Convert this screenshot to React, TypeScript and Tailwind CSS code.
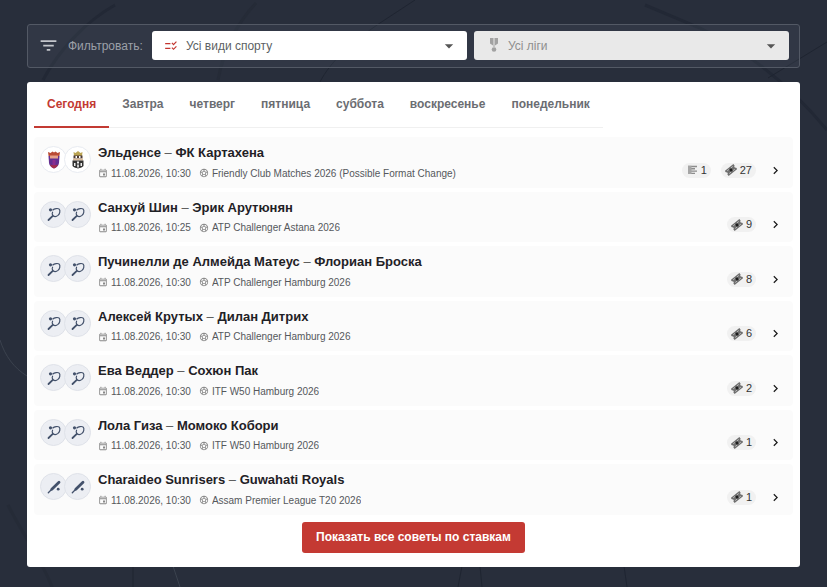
import React, { useState } from "react";
import {
  MdArrowDropDown,
  MdChecklistRtl,
  MdChevronRight,
  MdFilterList,
  MdOutlineEvent,
  MdSportsSoccer,
} from "react-icons/md";

type Match = {
  home: string;
  away: string;
  date: string;
  league: string;
  sport: "soccer" | "tennis" | "cricket";
  previews?: number;
  tips: number;
};

const days = ["Сегодня", "Завтра", "четверг", "пятница", "суббота", "воскресенье", "понедельник"];

const matches: Match[] = [
  { home: "Эльденсе", away: "ФК Картахена", date: "11.08.2026, 10:30", league: "Friendly Club Matches 2026 (Possible Format Change)", sport: "soccer", previews: 1, tips: 27 },
  { home: "Санхуй Шин", away: "Эрик Арутюнян", date: "11.08.2026, 10:25", league: "ATP Challenger Astana 2026", sport: "tennis", tips: 9 },
  { home: "Пучинелли де Алмейда Матеус", away: "Флориан Броска", date: "11.08.2026, 10:30", league: "ATP Challenger Hamburg 2026", sport: "tennis", tips: 8 },
  { home: "Алексей Крутых", away: "Дилан Дитрих", date: "11.08.2026, 10:30", league: "ATP Challenger Hamburg 2026", sport: "tennis", tips: 6 },
  { home: "Ева Веддер", away: "Сохюн Пак", date: "11.08.2026, 10:30", league: "ITF W50 Hamburg 2026", sport: "tennis", tips: 2 },
  { home: "Лола Гиза", away: "Момоко Кобори", date: "11.08.2026, 10:30", league: "ITF W50 Hamburg 2026", sport: "tennis", tips: 1 },
  { home: "Charaideo Sunrisers", away: "Guwahati Royals", date: "11.08.2026, 10:30", league: "Assam Premier League T20 2026", sport: "cricket", tips: 1 },
];

function Backdrop() {
  return (
    <svg
      className="absolute inset-0 h-full w-full"
      viewBox="0 0 827 587"
      preserveAspectRatio="none"
      fill="none"
      aria-hidden="true"
    >
      <g stroke="#222835" strokeWidth="3">
        <path d="M115 5C88 20 60 48 43 80" />
        <path d="M256 3C238 22 224 48 218 80" stroke="#252b37" />
        <path d="M645 5L700 28C745 50 790 85 827 130" />
        <path d="M8 505C20 530 42 560 52 587" stroke="#252b37" />
      </g>
      <g stroke="#1f2531">
        <path d="M415 0L380 23C352 42 330 62 320 82" />
        <path d="M827 42L768 78" />
        <path d="M458 587L462 566M480 566L482 587M624 566L627 587M133 566L133 587" />
      </g>
      <path d="M0 340C5 356 14 368 27 376M173 566L180 587" stroke="#3b424e" />
    </svg>
  );
}

function MedalIcon() {
  return (
    <svg className="h-4 w-4" viewBox="0 0 16 16" fill="#a2a2a2" aria-hidden="true">
      <path d="M4 1h3v7.500L4 6.500zM9 1h3v5.500L9 8.500z" />
      <path d="M7 1h2v9H7z" fill="#c6c6c6" />
      <circle cx="8" cy="12.500" r="2.300" />
    </svg>
  );
}

function TicketIcon() {
  return (
    <svg className="h-3 w-3" viewBox="0 0 12 12" fill="none" aria-hidden="true">
      <g transform="rotate(-38 6 6)">
        <path d="M.5 2.800h11v2.200a1 1 0 0 0 0 2v2.200H.5V7a1 1 0 0 0 0-2z" fill="#6e6e6e" />
        <path d="M2.500 4.300h2.200M7.300 4.300h2.200M2.500 7.700h2.200M7.300 7.700h2.200" stroke="#d5d5d5" strokeWidth=".7" />
        <path d="M4.800 4.800h2.400v2.400H4.800z" fill="#1c1c1c" />
      </g>
    </svg>
  );
}

function PreviewIcon() {
  return (
    <svg className="h-3 w-3" viewBox="0 0 12 12" fill="none" aria-hidden="true">
      <path d="M2 2.500h9M2 4.800h7M2 7.100h9M2 9.400h7" stroke="#8c8c8c" strokeWidth="1.400" />
      <path d="M2 1.800h3.500v8.200H2z" fill="#a5a5a5" />
    </svg>
  );
}

function TennisIcon() {
  return (
    <svg className="h-4 w-4" viewBox="0 0 16 16" fill="none" aria-hidden="true">
      <path
        d="M6.500 4.200C8.500 2.300 12 2 13.200 3.200c1.300 1.500.6 4.600-1.200 6.200-1.500 1.200-3.800 1.200-5 .3-.9-1-1-2.700-.3-4"
        stroke="#43516b"
        strokeWidth="1.200"
      />
      <path d="M6.800 9.800L2.500 14" stroke="#43516b" strokeWidth="1.800" strokeLinecap="round" />
      <circle cx="4.500" cy="3.800" r="1.600" fill="#43516b" />
    </svg>
  );
}

function CricketIcon() {
  return (
    <svg className="h-4 w-4" viewBox="0 0 16 16" fill="none" aria-hidden="true">
      <path d="M13 3.200L5.800 10.300" stroke="#43516b" strokeWidth="2.800" strokeLinecap="round" />
      <path d="M6 10L2.300 13.800" stroke="#43516b" strokeWidth="1.300" strokeLinecap="round" />
      <circle cx="12.200" cy="10.200" r="1.400" fill="#43516b" />
    </svg>
  );
}

function PurpleCrest() {
  return (
    <svg className="h-[18px] w-[18px]" viewBox="0 0 18 18" aria-hidden="true">
      <path d="M3 1l2.500 1L7.500.500 9 1.500 10.500.500l2 1.500L15 1l-.6 4H3.600z" fill="#ba4b35" />
      <path d="M3.500 5h11l-.5 7c-.3 2.500-2 4.500-5 5.500-3-1-4.700-3-5-5.500z" fill="#642f91" />
      <path d="M5 4.500h8v3H5z" fill="#e6a18a" />
      <path d="M7.500 9h3v5h-3z" fill="#8b2d8e" />
      <path d="M5 13.500c2 1 6 1 8 0-.8 2-2 3.200-4 4-2-.8-3.200-2-4-4z" fill="#a52e48" />
    </svg>
  );
}

function StripedCrest() {
  return (
    <svg className="h-[18px] w-[18px]" viewBox="0 0 18 18" aria-hidden="true">
      <path d="M4.500 1l2 1L9 0l2.500 2 2-1-.5 4H5z" fill="#bba453" />
      <path d="M4.500 4.500h9v3h-9z" fill="#4b3936" />
      <path d="M6.500 5H8v2H6.500zM10 5h1.500v2H10z" fill="#fff" />
      <path d="M4 7.500h10v2H4z" fill="#d8bb9b" />
      <path d="M3.500 9.500h11V15c-1.500 1.500-3.500 2-5.500 2.500C7 17 5 16.500 3.500 15z" fill="#333" />
      <path d="M5 12h1.500v3H5zM8 10.500h2v2H8zM8.200 13.500h1.600v3H8.200zM11.500 12H13v3h-1.500z" fill="#eee" />
    </svg>
  );
}

function Avatars({ sport }: { sport: Match["sport"] }) {
  if (sport === "soccer") {
    return (
      <div className="flex shrink-0 pt-[9px]">
        <span className="flex h-[27px] w-[27px] items-center justify-center rounded-full border border-[#e8ebf1] bg-white">
          <PurpleCrest />
        </span>
        <span className="-ml-[3px] flex h-[27px] w-[27px] items-center justify-center rounded-full border border-[#e8ebf1] bg-white">
          <StripedCrest />
        </span>
      </div>
    );
  }
  const Icon = sport === "tennis" ? TennisIcon : CricketIcon;
  return (
    <div className="flex shrink-0 pt-[9px]">
      <span className="flex h-[27px] w-[27px] items-center justify-center rounded-full border border-[#dfe2e9] bg-[#eceef3]">
        <Icon />
      </span>
      <span className="-ml-[3px] flex h-[27px] w-[27px] items-center justify-center rounded-full border border-[#dfe2e9] bg-[#eceef3]">
        <Icon />
      </span>
    </div>
  );
}

function MatchRow({ match }: { match: Match }) {
  return (
    <li>
      <a href="#match" className="flex rounded-sm bg-[#fbfbfb] pr-2.5 pl-1.5">
        <Avatars sport={match.sport} />
        <div className="min-w-0 flex-1 pt-1.5 pb-[7px] pl-[7px]">
          <h3 className="truncate text-[13px] leading-normal font-bold text-[#1f2126]">
            {match.home} <span className="font-normal text-[#555]">–</span> {match.away}
          </h3>
          <p className="mt-[3px] flex items-center text-[10px] leading-normal text-[#55585c]">
            <MdOutlineEvent size={10} className="mr-[3px] text-[#888]" />
            <time>{match.date}</time>
            <MdSportsSoccer size={10} className="mr-[3px] ml-2 text-[#888]" />
            <span className="truncate">{match.league}</span>
          </p>
        </div>
        <div className="flex items-end gap-2.5 pb-2.5 text-[11px] leading-[15px] text-[#333]">
          {match.previews && (
            <span className="flex items-center gap-[3px] rounded-full bg-[#f1f1f1] px-1">
              <PreviewIcon />
              {match.previews}
            </span>
          )}
          <span className="flex items-center gap-[3px] rounded-full bg-[#f1f1f1] px-1">
            <TicketIcon />
            {match.tips}
          </span>
          <MdChevronRight size={15} className="ml-0.5 text-[#1c1c1c]" stroke="currentColor" />
        </div>
      </a>
    </li>
  );
}

function App() {
  const [activeDay, setActiveDay] = useState(0);

  return (
    <div className="relative min-h-screen bg-[#282e3b] px-[27px] pt-6 pb-5 font-['Liberation_Sans',Arial,sans-serif]">
      <Backdrop />
      <main className="relative">
        {/* Filters */}
        <form className="flex items-center rounded-[3px] border border-[#535965] bg-[#4a5262]/25 px-2.5 pt-1.5 pb-[7px]">
          <MdFilterList size={21} className="shrink-0 text-[#c3c6cb]" />
          <span className="ml-[9px] w-[84px] shrink-0 text-[12px] text-[#9ca0a8]">Фильтровать:</span>
          <div className="flex flex-1 gap-[7px]">
            <div className="relative flex-1">
              <MdChecklistRtl size={14} className="absolute top-2 left-3 text-[#c3352f]" />
              <select
                aria-label="Усі види спорту"
                className="block h-[29px] w-full appearance-none rounded-[3px] bg-white pl-[34px] text-[12px] text-[#5c5f63]"
              >
                <option>Усі види спорту</option>
              </select>
              <MdArrowDropDown size={20} className="pointer-events-none absolute top-[5px] right-2 text-[#555]" />
            </div>
            <div className="relative flex-1">
              <div className="absolute top-1.5 left-3">
                <MedalIcon />
              </div>
              <select
                aria-label="Усі ліги"
                disabled
                className="block h-[29px] w-full appearance-none rounded-[3px] bg-[#e9e9e9] pl-[34px] text-[12px] text-[#8e8e8e] opacity-100"
              >
                <option>Усі ліги</option>
              </select>
              <MdArrowDropDown size={20} className="pointer-events-none absolute top-[5px] right-2 text-[#555]" />
            </div>
          </div>
        </form>

        {/* Matches */}
        <section className="mt-3.5 rounded-[3px] bg-white px-[7px] pb-3.5">
          <div role="tablist" className="flex w-fit border-b border-[#f0f0f0]">
            {days.map((day, index) => (
              <button
                key={day}
                type="button"
                role="tab"
                aria-selected={index === activeDay}
                onClick={() => setActiveDay(index)}
                className={`-mb-px h-[46px] border-b-2 px-[13px] text-[12px] font-bold ${
                  index === activeDay ? "border-[#c33a33] text-[#c33a33]" : "border-transparent text-[#6b6d72]"
                }`}
              >
                {day}
              </button>
            ))}
          </div>

          <ul className="mt-[9px] flex flex-col gap-1">
            {matches.map((match) => (
              <MatchRow key={match.home} match={match} />
            ))}
          </ul>

          <div className="mt-[7px] flex justify-center">
            <button
              type="button"
              className="h-[31px] rounded-[3px] bg-[#c43a33] px-3.5 text-[12px] font-bold text-white"
            >
              Показать все советы по ставкам
            </button>
          </div>
        </section>
      </main>
    </div>
  );
}

export default App;
